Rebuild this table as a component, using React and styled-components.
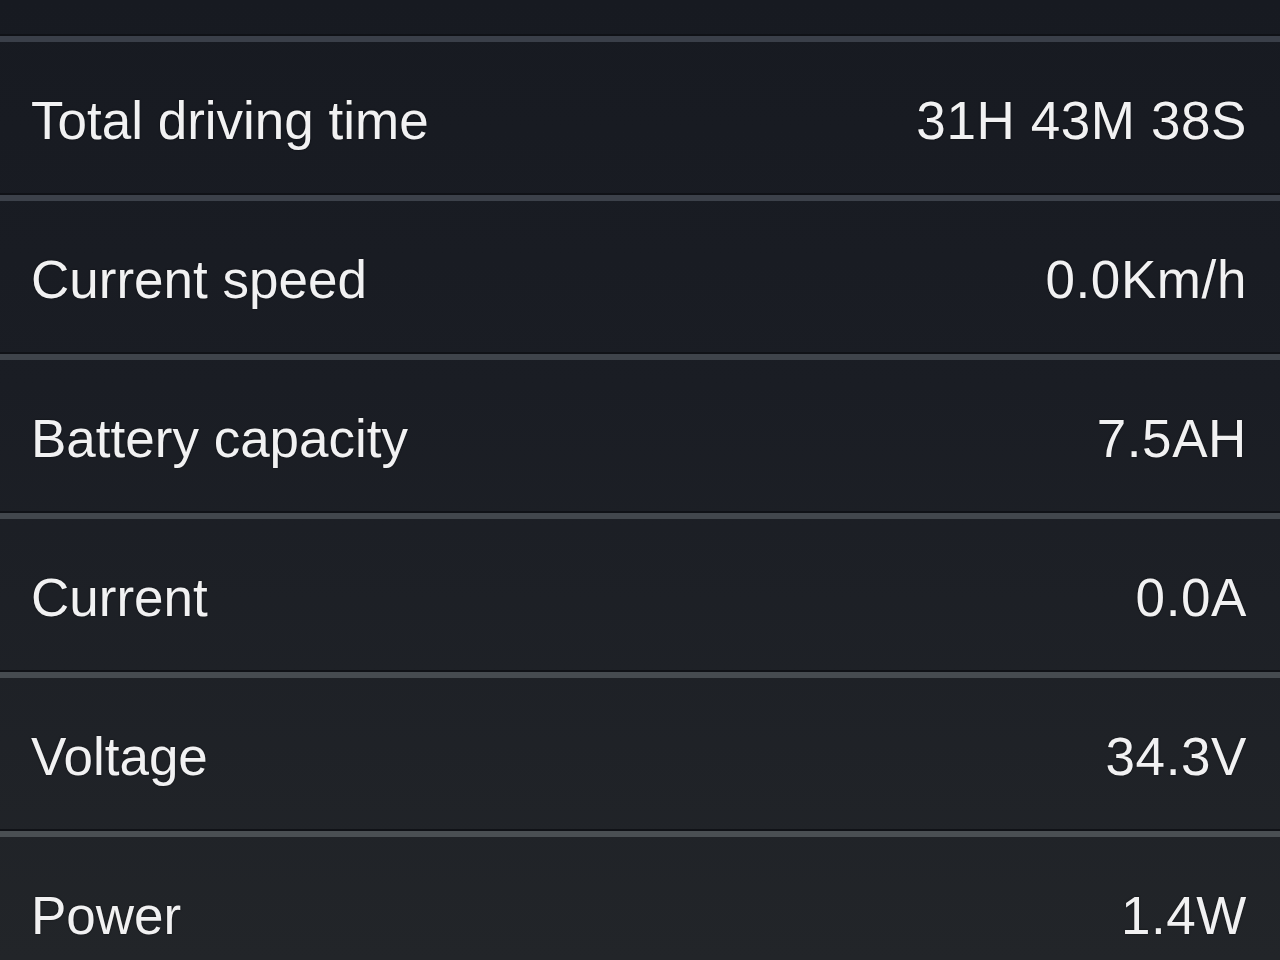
import React from 'react';
import styled, { createGlobalStyle } from 'styled-components';

const GlobalStyle = createGlobalStyle`
  html, body {
    margin: 0;
    padding: 0;
    height: 100%;
  }
  body {
    background: linear-gradient(180deg, #171a21 0%, #1a1d24 40%, #222529 100%);
    overflow: hidden;
    font-family: "Liberation Sans", Arial, sans-serif;
  }
`;

const List = styled.div`
  padding-top: 34px;
  height: 960px;
  box-sizing: border-box;
  overflow: hidden;
`;

const Row = styled.div`
  display: flex;
  align-items: center;
  justify-content: space-between;
  height: 146px;
  padding: 11px 33px 0 31px;
  border-top: 2px solid #101217;
  box-shadow: inset 0 6px 0 ${props => props.line};
`;

const Label = styled.div`
  color: #f1f1f2;
  font-size: 53px;
  text-shadow: 0 0 2px rgba(0, 0, 0, 0.6);
`;

const Value = styled(Label)`
  text-align: right;
  letter-spacing: 0.6px;
`;

const rows = [
  { label: 'Total driving time', value: '31H 43M 38S' },
  { label: 'Current speed', value: '0.0Km/h' },
  { label: 'Battery capacity', value: '7.5AH' },
  { label: 'Current', value: '0.0A' },
  { label: 'Voltage', value: '34.3V' },
  { label: 'Power', value: '1.4W' },
];

const lineColors = ['#3a3f49', '#3c414a', '#3f444b', '#42474d', '#464b50', '#4a4f53'];

const App = () => {
  return (
    <>
      <GlobalStyle />
      <List>
        {rows.map((row, index) => (
          <Row key={index} line={lineColors[index]}>
            <Label>{row.label}</Label>
            <Value>{row.value}</Value>
          </Row>
        ))}
      </List>
    </>
  );
};

export default App;
